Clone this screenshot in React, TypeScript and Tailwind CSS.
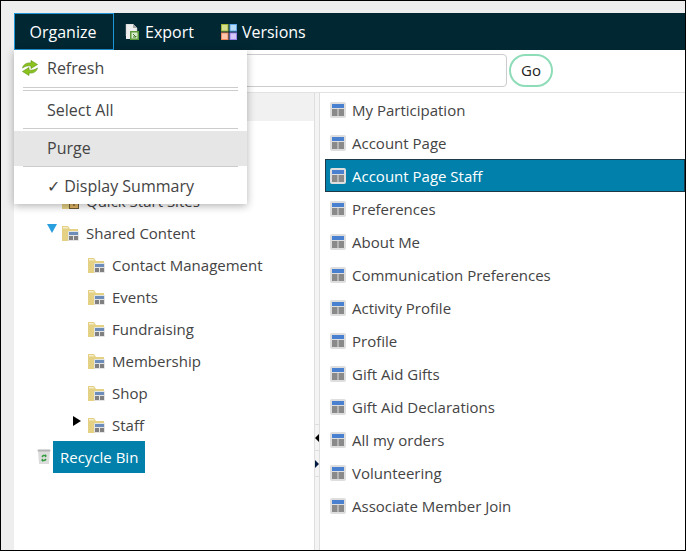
import React from "react";

const PageIcon = () => (
  <svg width="16" height="16" viewBox="0 0 16 16" className="shrink-0">
    <rect x="0" y="0" width="16" height="16" rx="2" fill="#dedede" />
    <rect x="2" y="2" width="12" height="4" fill="#4a80d0" />
    <rect x="2" y="7" width="5.500" height="7" fill="#8a8a8a" />
    <rect x="8.500" y="7" width="5.500" height="7" fill="#8a8a8a" />
  </svg>
);

const FolderIcon = ({ badge = "page" }: { badge?: "page" | "lock" }) => (
  <svg width="17" height="16" viewBox="0 0 17 16" className="shrink-0">
    <path d="M0 1h6l2 3h8v12H0z" fill="#e5d184" />
    <path d="M1 2h4.500l1 1.500H1z" fill="#f4ecc8" />
    {badge === "page" ? (
      <>
        <rect x="6" y="6" width="11" height="10" rx="1" fill="#e4e4e4" />
        <rect x="7" y="7" width="9" height="3" fill="#6c8cba" />
        <rect x="7" y="11" width="4" height="4" fill="#808080" />
        <rect x="12" y="11" width="4" height="4" fill="#808080" />
      </>
    ) : (
      <>
        <rect x="7.500" y="6.500" width="9" height="9" fill="#e2b565" stroke="#6b5a35" />
        <path d="M10 9h4M12 9v4" stroke="#5a4520" strokeWidth="1" />
      </>
    )}
  </svg>
);

const RefreshIcon = () => (
  <svg width="16" height="16" viewBox="0 0 16 16" className="shrink-0">
    <path d="M0.500 8C1.500 4 5 2.500 9 3V0.500l6.500 4L9 8.500V6C6 5.500 3.500 6 0.500 8z" fill="#8cc21e" stroke="#5a9410" strokeWidth=".6" />
    <path d="M15.500 8C14.500 12 11 13.500 7 13v2.500l-6.500-4L7 7.500V10c3 .5 5.500 0 8.500-2z" fill="#8cc21e" stroke="#5a9410" strokeWidth=".6" />
  </svg>
);

const ExportIcon = () => (
  <svg width="14" height="16" viewBox="0 0 14 16" className="shrink-0">
    <path d="M1 0h7l4 4v8H1z" fill="#eeeeee" stroke="#bdbdbd" strokeWidth=".5" />
    <path d="M8 0v4h4z" fill="#a8a8a8" />
    <rect x="1" y="10" width="5" height="5" fill="#eeeeee" />
    <rect x="5" y="7" width="9" height="9" fill="#5d9a3a" />
    <rect x="6.500" y="8.500" width="6" height="6" fill="#d9ead0" />
    <path d="M8 10l3 3M8 13h3v-1" stroke="#3d7a22" strokeWidth="1" fill="none" />
  </svg>
);

const VersionsIcon = () => (
  <svg width="16" height="16" viewBox="0 0 16 16" className="shrink-0">
    <rect x="0.500" y="0.500" width="6.500" height="6.500" fill="#d5e08c" stroke="#a4b838" />
    <rect x="9" y="0.500" width="6.500" height="6.500" fill="#b7dcf8" stroke="#60a8e8" />
    <rect x="0.500" y="9" width="6.500" height="6.500" fill="#fbc6ac" stroke="#f0885c" />
    <rect x="9" y="9" width="6.500" height="6.500" fill="#d5c8f8" stroke="#9a84ee" />
  </svg>
);

const BinIcon = () => (
  <svg width="14" height="16" viewBox="0 0 14 16" className="shrink-0">
    <path d="M1 1.500h12l-1 13.500H2z" fill="#dcdcdc" />
    <rect x="0.500" y="0.500" width="13" height="2" rx="1" fill="#b4b4b4" />
    <path d="M4.500 7.500c.5-1.500 2-2 3.500-1.500V5l2 2-2 1.500V7.500c-1-.5-2 0-2.500 1zM9.500 10.500c-.5 1.500-2 2-3.500 1.500v1l-2-2 2-1.500v1c1 .5 2 0 2.500-1z" fill="#2f9b3c" />
  </svg>
);

const items = [
  "My Participation",
  "Account Page",
  "Account Page Staff",
  "Preferences",
  "About Me",
  "Communication Preferences",
  "Activity Profile",
  "Profile",
  "Gift Aid Gifts",
  "Gift Aid Declarations",
  "All my orders",
  "Volunteering",
  "Associate Member Join",
];

const children = ["Contact Management", "Events", "Fundraising", "Membership", "Shop", "Staff"];

export default function App() {
  return (
    <div className="relative flex h-[551px] w-[686px] flex-col overflow-hidden border border-black bg-[#eeeeee] pl-[13px] pt-3 font-['Open_Sans',sans-serif] text-[15px] text-[#444444]">
      <div className="flex h-[37px] shrink-0 bg-[#012733] text-[16px] text-white">
        <div className="flex h-[37px] w-[100px] items-center justify-center border border-[#1e96d8] pr-[2px]">Organize</div>
        <div className="ml-[11px] flex items-center gap-[6px]">
          <ExportIcon />
          <span>Export</span>
        </div>
        <div className="ml-[27px] flex items-center gap-[5px]">
          <VersionsIcon />
          <span>Versions</span>
        </div>
      </div>

      <div className="flex min-h-0 flex-1 flex-col bg-white">
        <div className="flex h-[43px] shrink-0 items-start justify-end gap-[2px] border-b border-[#e2e2e2] pr-[132px] pt-1">
          <div className="h-[33px] w-[300px] rounded border border-[#cccccc] bg-white" />
          <button className="flex h-[33px] w-[44px] items-center justify-center rounded-full border-2 border-[#8fdcb8] bg-white text-[15px] text-[#222222]">
            Go
          </button>
        </div>

        <div className="flex min-h-0 flex-1">
          <div className="relative w-[300px] shrink-0">
            <div className="h-[28px] bg-[#f1f1f1]" />
            <div className="h-[64px]" />
            <div className="flex h-[32px] items-center pl-[48px]">
              <FolderIcon badge="lock" />
              <span className="ml-[7px]">Quick Start Sites</span>
            </div>
            <div className="flex h-[32px] items-center pl-[33px]">
              <svg width="10" height="9" viewBox="0 0 10 9" className="mb-[9px] shrink-0">
                <path d="M0 0h10L5 9z" fill="#2a9fdf" />
              </svg>
              <span className="ml-[5px]">
                <FolderIcon />
              </span>
              <span className="ml-[7px]">Shared Content</span>
            </div>
            {children.map((c) => (
              <div key={c} className="flex h-[32px] items-center pl-[74px]">
                <FolderIcon />
                <span className="ml-[7px]">{c}</span>
                {c === "Staff" && (
                  <svg width="8" height="10" viewBox="0 0 8 10" className="absolute left-[59px] mt-[-8px]">
                    <path d="M0 0l8 5-8 5z" fill="#000" />
                  </svg>
                )}
              </div>
            ))}
            <div className="flex h-[32px] items-center pl-[23px]">
              <BinIcon />
              <span className="ml-[2px] flex h-[32px] items-center bg-[#0080aa] px-[7px] text-white">Recycle Bin</span>
            </div>
          </div>

          <div className="flex w-[6px] shrink-0 flex-col border-x border-[#dedede] bg-[#f4f4f4]">
            <div className="h-[332px] border-b border-[#dedede]" />
            <div className="flex h-[26px] items-center justify-start border-b border-[#dedede]">
              <span className="h-0 w-0 border-y-[4px] border-r-[4px] border-y-transparent border-r-black" />
            </div>
            <div className="flex h-[26px] items-center justify-start border-b border-[#dedede]">
              <span className="h-0 w-0 border-y-[4px] border-l-[4px] border-y-transparent border-l-[#001a40]" />
            </div>
          </div>

          <div className="min-w-0 flex-1 pl-[5px]">
            {items.map((t) => {
              const selected = t === "Account Page Staff";
              return (
                <div
                  key={t}
                  className={
                    selected
                      ? "flex h-[33px] items-center gap-[6px] border border-[#1c3a47] bg-[#0080aa] pl-1 text-white"
                      : "flex h-[33px] items-center gap-[6px] pl-[5px]"
                  }
                >
                  <PageIcon />
                  <span className="pt-[2px]">{t}</span>
                </div>
              );
            })}
          </div>
        </div>
      </div>

      <div className="absolute left-[13px] top-[49px] flex h-[154px] w-[233px] flex-col bg-white text-[16px] shadow-[0_2px_8px_rgba(0,0,0,0.3)]">
        <div className="flex h-[37px] items-center pb-[2px] pl-[8px]">
          <RefreshIcon />
          <span className="ml-[9px]">Refresh</span>
        </div>
        <div className="mx-[9px] h-px shrink-0 bg-[#cccccc]" />
        <div className="mx-[9px] mt-[2px] h-px shrink-0 bg-[#cccccc]" />
        <div className="flex h-[37px] items-center pl-[33px]">Select All</div>
        <div className="mx-[9px] h-px shrink-0 bg-[#cccccc]" />
        <div className="mt-[2px] flex h-[35px] items-center bg-[#e6e6e6] pb-[2px] pl-[33px]">Purge</div>
        <div className="mx-[9px] h-px shrink-0 bg-[#cccccc]" />
        <div className="flex flex-1 items-center pl-[33px]">✓ Display Summary</div>
      </div>
    </div>
  );
}
